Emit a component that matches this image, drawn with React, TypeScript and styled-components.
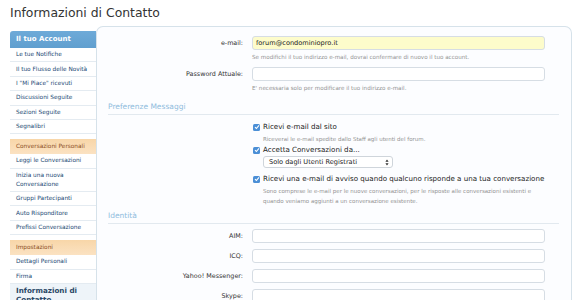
import styled, { createGlobalStyle } from "styled-components";

const GlobalStyle = createGlobalStyle`
  body {
    margin: 0;
    background: #fff;
    font-family: "DejaVu Sans", Verdana, sans-serif;
    color: #222;
  }
`;

const Page = styled.div`
  padding: 5px 13px 0 10px;
  height: 300px;
  overflow: hidden;
  box-sizing: border-box;
`;

const Title = styled.h1`
  margin: 0;
  font-size: 12.4px;
  font-weight: normal;
  line-height: 16px;
  color: #333;
`;

const Layout = styled.div`
  display: flex;
  margin-top: 5px;
`;

const Sidebar = styled.nav`
  width: 86px;
  flex: 0 0 86px;
  padding-top: 5px;
`;

const Group = styled.div`
  margin-bottom: 5px;
`;

const GroupHeader = styled.div<{ $tone: "blue" | "orange" }>`
  padding-left: 6px;
  color: ${(p) => (p.$tone === "blue" ? "#fff" : "#8b4d22")};
  background: ${(p) =>
    p.$tone === "blue"
      ? "linear-gradient(#6eaad8, #609fcf)"
      : "linear-gradient(#f8d6a8, #fbe2c2)"};
  font-size: ${(p) => (p.$tone === "blue" ? "7px" : "5.8px")};
  font-weight: ${(p) => (p.$tone === "blue" ? "bold" : "normal")};
  line-height: ${(p) => (p.$tone === "blue" ? "17px" : "15px")};
  border-radius: ${(p) => (p.$tone === "blue" ? "3px 0 0 0" : "0")};
`;

const NavItem = styled.a<{ $active?: boolean }>`
  display: block;
  padding: ${(p) => (p.$active ? "2px 6px" : "2.2px 6px")};
  font-size: ${(p) => (p.$active ? "7.2px" : "5.8px")};
  font-weight: ${(p) => (p.$active ? "bold" : "normal")};
  line-height: 9px;
  color: ${(p) => (p.$active ? "#2a4866" : "#1a4873")};
  background: ${(p) => (p.$active ? "#eef4f9" : "#fff")};
  border-bottom: 1px solid #e4ebf1;
  text-decoration: none;
`;

const MainBox = styled.main`
  flex: 1;
  border: 1px solid #d6e2ea;
  border-bottom: none;
  border-radius: 7px 7px 0 0;
  background: #fcfdff;
  padding: 9px 0 0 0;
  height: 300px;
`;

const FormRow = styled.div<{ $gap?: number }>`
  display: grid;
  grid-template-columns: 146px 293px;
  column-gap: 9px;
  align-items: center;
  margin-top: ${(p) => p.$gap ?? 0}px;
`;

const Label = styled.label`
  text-align: right;
  font-size: 6.4px;
  color: #333;
`;

const TextInput = styled.div<{ $filled?: boolean }>`
  height: 14px;
  box-sizing: border-box;
  border: 1px solid #d6dde4;
  border-radius: 3px;
  background: ${(p) => (p.$filled ? "#fdfccb" : "#fff")};
  font-size: 6.6px;
  line-height: 12px;
  padding-left: 3px;
  color: #222;
`;

const Hint = styled.div`
  margin: 2px 0 0 155px;
  font-size: 5.6px;
  line-height: 10px;
  color: #939393;
  width: 293px;
`;

const SectionTitle = styled.h3<{ $top: number }>`
  margin: ${(p) => p.$top}px 12px 0 11px;
  padding-bottom: 2px;
  border-bottom: 1px solid #e2e9ef;
  font-size: 7.5px;
  font-weight: normal;
  line-height: 10px;
  color: #8fbcdd;
`;

const CheckRow = styled.div<{ $top?: number }>`
  display: flex;
  align-items: center;
  gap: 3px;
  margin: ${(p) => p.$top ?? 0}px 0 0 156px;
  font-size: 7.1px;
  line-height: 10px;
  color: #222;
`;

const Box = styled.span`
  flex: 0 0 7px;
  width: 7px;
  height: 7px;
  border-radius: 1.5px;
  background: #4b8fd6;
  display: inline-flex;
  align-items: center;
  justify-content: center;
`;

const CheckHint = styled.div`
  margin: 2px 0 0 166px;
  font-size: 5.5px;
  line-height: 10px;
  color: #939393;
  width: 290px;
`;

const Select = styled.div`
  margin: 1px 0 0 166px;
  width: 130px;
  height: 12px;
  box-sizing: border-box;
  border: 1px solid #cfd5db;
  border-radius: 3px;
  background: #fff;
  display: flex;
  align-items: center;
  justify-content: space-between;
  padding: 0 3px 0 5px;
  font-size: 6.6px;
  color: #222;
`;

const Check = () => (
  <Box>
    <svg width="6" height="6" viewBox="0 0 6 6">
      <path d="M1 3.2 L2.4 4.5 L5 1.4" stroke="#fff" strokeWidth="1.1" fill="none" />
    </svg>
  </Box>
);

const Arrows = () => (
  <svg width="4" height="7" viewBox="0 0 4 7">
    <path d="M2 0.5 L3.6 2.8 H0.4 Z M2 6.5 L3.6 4.2 H0.4 Z" fill="#333" />
  </svg>
);

const nav = [
  {
    title: "Il tuo Account",
    tone: "blue" as const,
    items: [
      "Le tue Notifiche",
      "Il tuo Flusso delle Novità",
      "I \"Mi Piace\" ricevuti",
      "Discussioni Seguite",
      "Sezioni Seguite",
      "Segnalibri",
    ],
  },
  {
    title: "Conversazioni Personali",
    tone: "orange" as const,
    items: [
      "Leggi le Conversazioni",
      "Inizia una nuova Conversazione",
      "Gruppi Partecipanti",
      "Auto Risponditore",
      "Prefissi Conversazione",
    ],
  },
  {
    title: "Impostazioni",
    tone: "orange" as const,
    items: ["Dettagli Personali", "Firma", "Informazioni di Contatto"],
  },
];

const identity = ["AIM:", "ICQ:", "Yahoo! Messenger:", "Skype:"];

const App = () => (
  <Page>
    <GlobalStyle />
    <Title>Informazioni di Contatto</Title>
    <Layout>
      <Sidebar>
        {nav.map((g) => (
          <Group key={g.title}>
            <GroupHeader $tone={g.tone}>{g.title}</GroupHeader>
            {g.items.map((it) => (
              <NavItem key={it} $active={it === "Informazioni di Contatto"}>
                {it}
              </NavItem>
            ))}
          </Group>
        ))}
      </Sidebar>
      <MainBox>
        <FormRow>
          <Label>e-mail:</Label>
          <TextInput $filled>forum@condominiopro.it</TextInput>
        </FormRow>
        <Hint>Se modifichi il tuo indirizzo e-mail, dovrai confermare di nuovo il tuo account.</Hint>
        <FormRow $gap={5}>
          <Label>Password Attuale:</Label>
          <TextInput />
        </FormRow>
        <Hint>E' necessaria solo per modificare il tuo indirizzo e-mail.</Hint>

        <SectionTitle $top={9}>Preferenze Messaggi</SectionTitle>
        <CheckRow $top={7}>
          <Check />
          Ricevi e-mail dal sito
        </CheckRow>
        <CheckHint>Riceverai le e-mail spedite dallo Staff agli utenti del forum.</CheckHint>
        <CheckRow $top={1}>
          <Check />
          Accetta Conversazioni da...
        </CheckRow>
        <Select>
          Solo dagli Utenti Registrati
          <Arrows />
        </Select>
        <CheckRow $top={6}>
          <Check />
          Ricevi una e-mail di avviso quando qualcuno risponde a una tua conversazione
        </CheckRow>
        <CheckHint>
          Sono comprese le e-mail per le nuove conversazioni, per le risposte alle conversazioni esistenti e
          <br />
          quando veniamo aggiunti a un conversazione esistente.
        </CheckHint>

        <SectionTitle $top={5}>Identità</SectionTitle>
        {identity.map((l, i) => (
          <FormRow key={l} $gap={i === 0 ? 5 : 6}>
            <Label>{l}</Label>
            <TextInput />
          </FormRow>
        ))}
      </MainBox>
    </Layout>
  </Page>
);

export default App;
